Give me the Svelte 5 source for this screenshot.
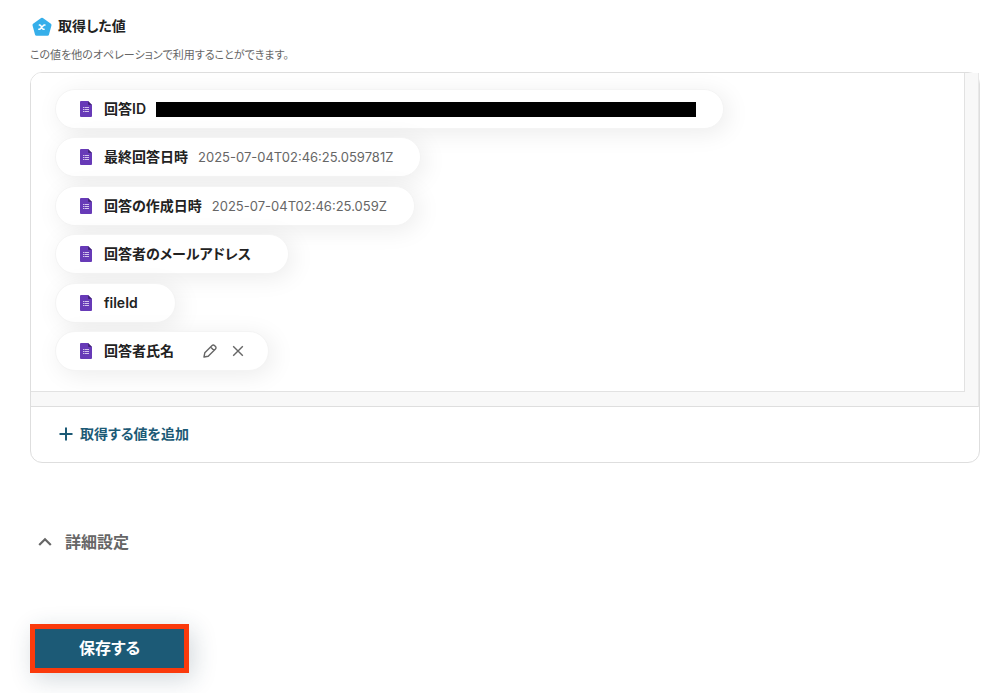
<script lang="ts">
  type Value = {
    label: string
    value?: string
    masked?: boolean
    editable?: boolean
  }

  let values: Array<Value> = $state([
    { label: '回答ID', masked: true },
    { label: '最終回答日時', value: '2025-07-04T02:46:25.059781Z' },
    { label: '回答の作成日時', value: '2025-07-04T02:46:25.059Z' },
    { label: '回答者のメールアドレス' },
    { label: 'fileId' },
    { label: '回答者氏名', editable: true }
  ])

  function remove(index: number) {
    values.splice(index, 1)
  }
</script>

<main>
  <header>
    <h2>
      <svg class="badge" viewBox="0 0 20 20" aria-hidden="true">
        <path
          d="M10 3.2 18 9 15.500 18.300H4.500L2 9z"
          fill="#36afea"
          stroke="#36afea"
          stroke-width="3"
          stroke-linejoin="round"
        />
        <path
          d="M7.400 9c1.100-.2 1.500.3 2 1.700l.5 1.300c.5 1.200 1.100 1.500 2.200 1.200M12.900 9c-.9-.2-1.400.2-2 1l-2 2.300c-.6.8-1.200 1.100-2.100.9"
          fill="none"
          stroke="#fff"
          stroke-width="1.5"
          stroke-linecap="round"
        />
      </svg>
      取得した値
    </h2>
    <p>この値を他のオペレーションで利用することができます。</p>
  </header>

  <section class="panel">
    <div class="scroller">
      <ul>
        {#each values as item, i}
          <li>
            <svg class="doc" viewBox="0 0 12 16" aria-hidden="true">
              <path d="M1 0h7l4 4v11a1 1 0 0 1-1 1H1a1 1 0 0 1-1-1V1a1 1 0 0 1 1-1z" fill="#673ab7" />
              <path d="M8 0l4 4H9a1 1 0 0 1-1-1z" fill="#432478" />
              <path
                d="M3 6.500h1M4.500 6.500h4.500M3 8.500h1M4.500 8.500h4.500M3 10.500h1M4.500 10.500h4.500"
                stroke="#d3c3ec"
                stroke-width="1"
              />
            </svg>
            <span class="label">{item.label}</span>
            {#if item.masked}
              <span class="mask"></span>
            {/if}
            {#if item.value}
              <span class="value">{item.value}</span>
            {/if}
            {#if item.editable}
              <span class="actions">
                <button aria-label="編集">
                  <svg viewBox="0 0 16 16">
                    <path
                      d="M2 14l.8-4.200 7.300-7.300a1.600 1.600 0 0 1 2.300 0l1.100 1.100a1.600 1.600 0 0 1 0 2.300l-7.300 7.300zM8.600 4l3.400 3.400"
                    />
                  </svg>
                </button>
                <button aria-label="削除" onclick={() => remove(i)}>
                  <svg viewBox="0 0 16 16">
                    <path d="M3.200 3.200l9.600 9.600M12.800 3.200l-9.600 9.600" />
                  </svg>
                </button>
              </span>
            {/if}
          </li>
        {/each}
      </ul>
    </div>
    <div class="footer">
      <button class="add">
        <svg viewBox="0 0 14 14" aria-hidden="true"><path d="M7 .5v13M.5 7h13" /></svg>
        取得する値を追加
      </button>
    </div>
  </section>

  <button class="advanced">
    <svg viewBox="0 0 14 10" aria-hidden="true"><path d="M1.200 8 7 2.200 12.800 8" /></svg>
    詳細設定
  </button>

  <button class="save">保存する</button>
</main>

<style>
  :global(body) {
    background: #fff;
  }
  main {
    padding: 16px 22px 20px 30px;
    color: #222;
    font-family: Inter, 'Noto Sans CJK JP', sans-serif;
    font-size: 14px;
    font-feature-settings: 'palt';
  }
  button {
    border: 0;
    margin: 0;
    padding: 0;
    background: none;
    color: inherit;
    font: inherit;
    font-feature-settings: inherit;
    cursor: pointer;
  }
  svg {
    display: block;
    flex: none;
  }

  h2 {
    display: flex;
    align-items: center;
    gap: 6px;
    margin: 0;
    padding-left: 2px;
    font-size: 14px;
    font-weight: 600;
    line-height: 20px;
  }
  .badge {
    width: 20px;
    height: 20px;
  }
  header p {
    margin: 9px 0 7px;
    color: #666;
    font-size: 11px;
    line-height: 20px;
  }

  .panel {
    border: 1px solid #dedede;
    border-radius: 12px;
  }
  /* the gutters on the right and bottom are the scrollbar tracks */
  .scroller {
    padding: 0 13px 14px 0;
    background: #f8f8f8;
    border-right: 1px solid #e8e8e8;
    border-bottom: 1px solid #dedede;
    border-top-left-radius: 11px;
  }
  ul {
    display: flex;
    flex-direction: column;
    justify-content: space-between;
    align-items: flex-start;
    box-sizing: border-box;
    min-height: 319px;
    margin: 0;
    padding: 16px 24px 20px;
    background: #fff;
    border-right: 1px solid #e2e2e2;
    border-bottom: 1px solid #e2e2e2;
    border-top-left-radius: 11px;
    list-style: none;
    overflow: hidden;
  }
  li {
    display: flex;
    align-items: center;
    box-sizing: border-box;
    height: 40px;
    padding: 0 27px 0 24px;
    background: #fff;
    border: 1px solid #f4f4f4;
    border-radius: 20px;
    box-shadow: 4px 4px 24px rgba(0, 0, 0, 0.08);
    white-space: nowrap;
  }
  .doc {
    width: 12px;
    height: 16px;
    margin-right: 12px;
  }
  .label {
    margin-right: 10px;
    font-weight: 600;
    line-height: 20px;
  }
  .value {
    color: #666;
    font-size: 13px;
    line-height: 20px;
  }
  .mask {
    width: 540px;
    height: 15px;
    background: #000;
  }
  .actions {
    display: flex;
    gap: 12px;
    margin: 0 -5px 0 18px;
  }
  .actions svg {
    width: 16px;
    height: 16px;
    fill: none;
    stroke: #666;
    stroke-width: 1.4;
    stroke-linejoin: round;
  }

  .footer {
    padding: 17px 28px 18px;
  }
  .add {
    display: flex;
    align-items: center;
    gap: 7px;
    color: #1c5a76;
    font-weight: 600;
    line-height: 20px;
  }
  .add svg {
    width: 14px;
    height: 14px;
    stroke: currentColor;
    stroke-width: 2;
  }

  .advanced {
    display: flex;
    align-items: center;
    gap: 13px;
    margin: 67px 0 0 8px;
    color: #666;
    font-size: 16px;
    font-weight: 600;
    line-height: 24px;
  }
  .advanced svg {
    width: 14px;
    height: 10px;
    fill: none;
    stroke: currentColor;
    stroke-width: 2.2;
  }

  .save {
    display: block;
    margin-top: 70px;
    padding: 8px 44px;
    border: 5px solid #fa3a0c;
    background: #1c5a76;
    box-shadow: 4px 6px 24px rgba(28, 60, 80, 0.2);
    color: #fff;
    font-size: 16px;
    font-weight: 600;
    line-height: 23px;
  }
</style>
